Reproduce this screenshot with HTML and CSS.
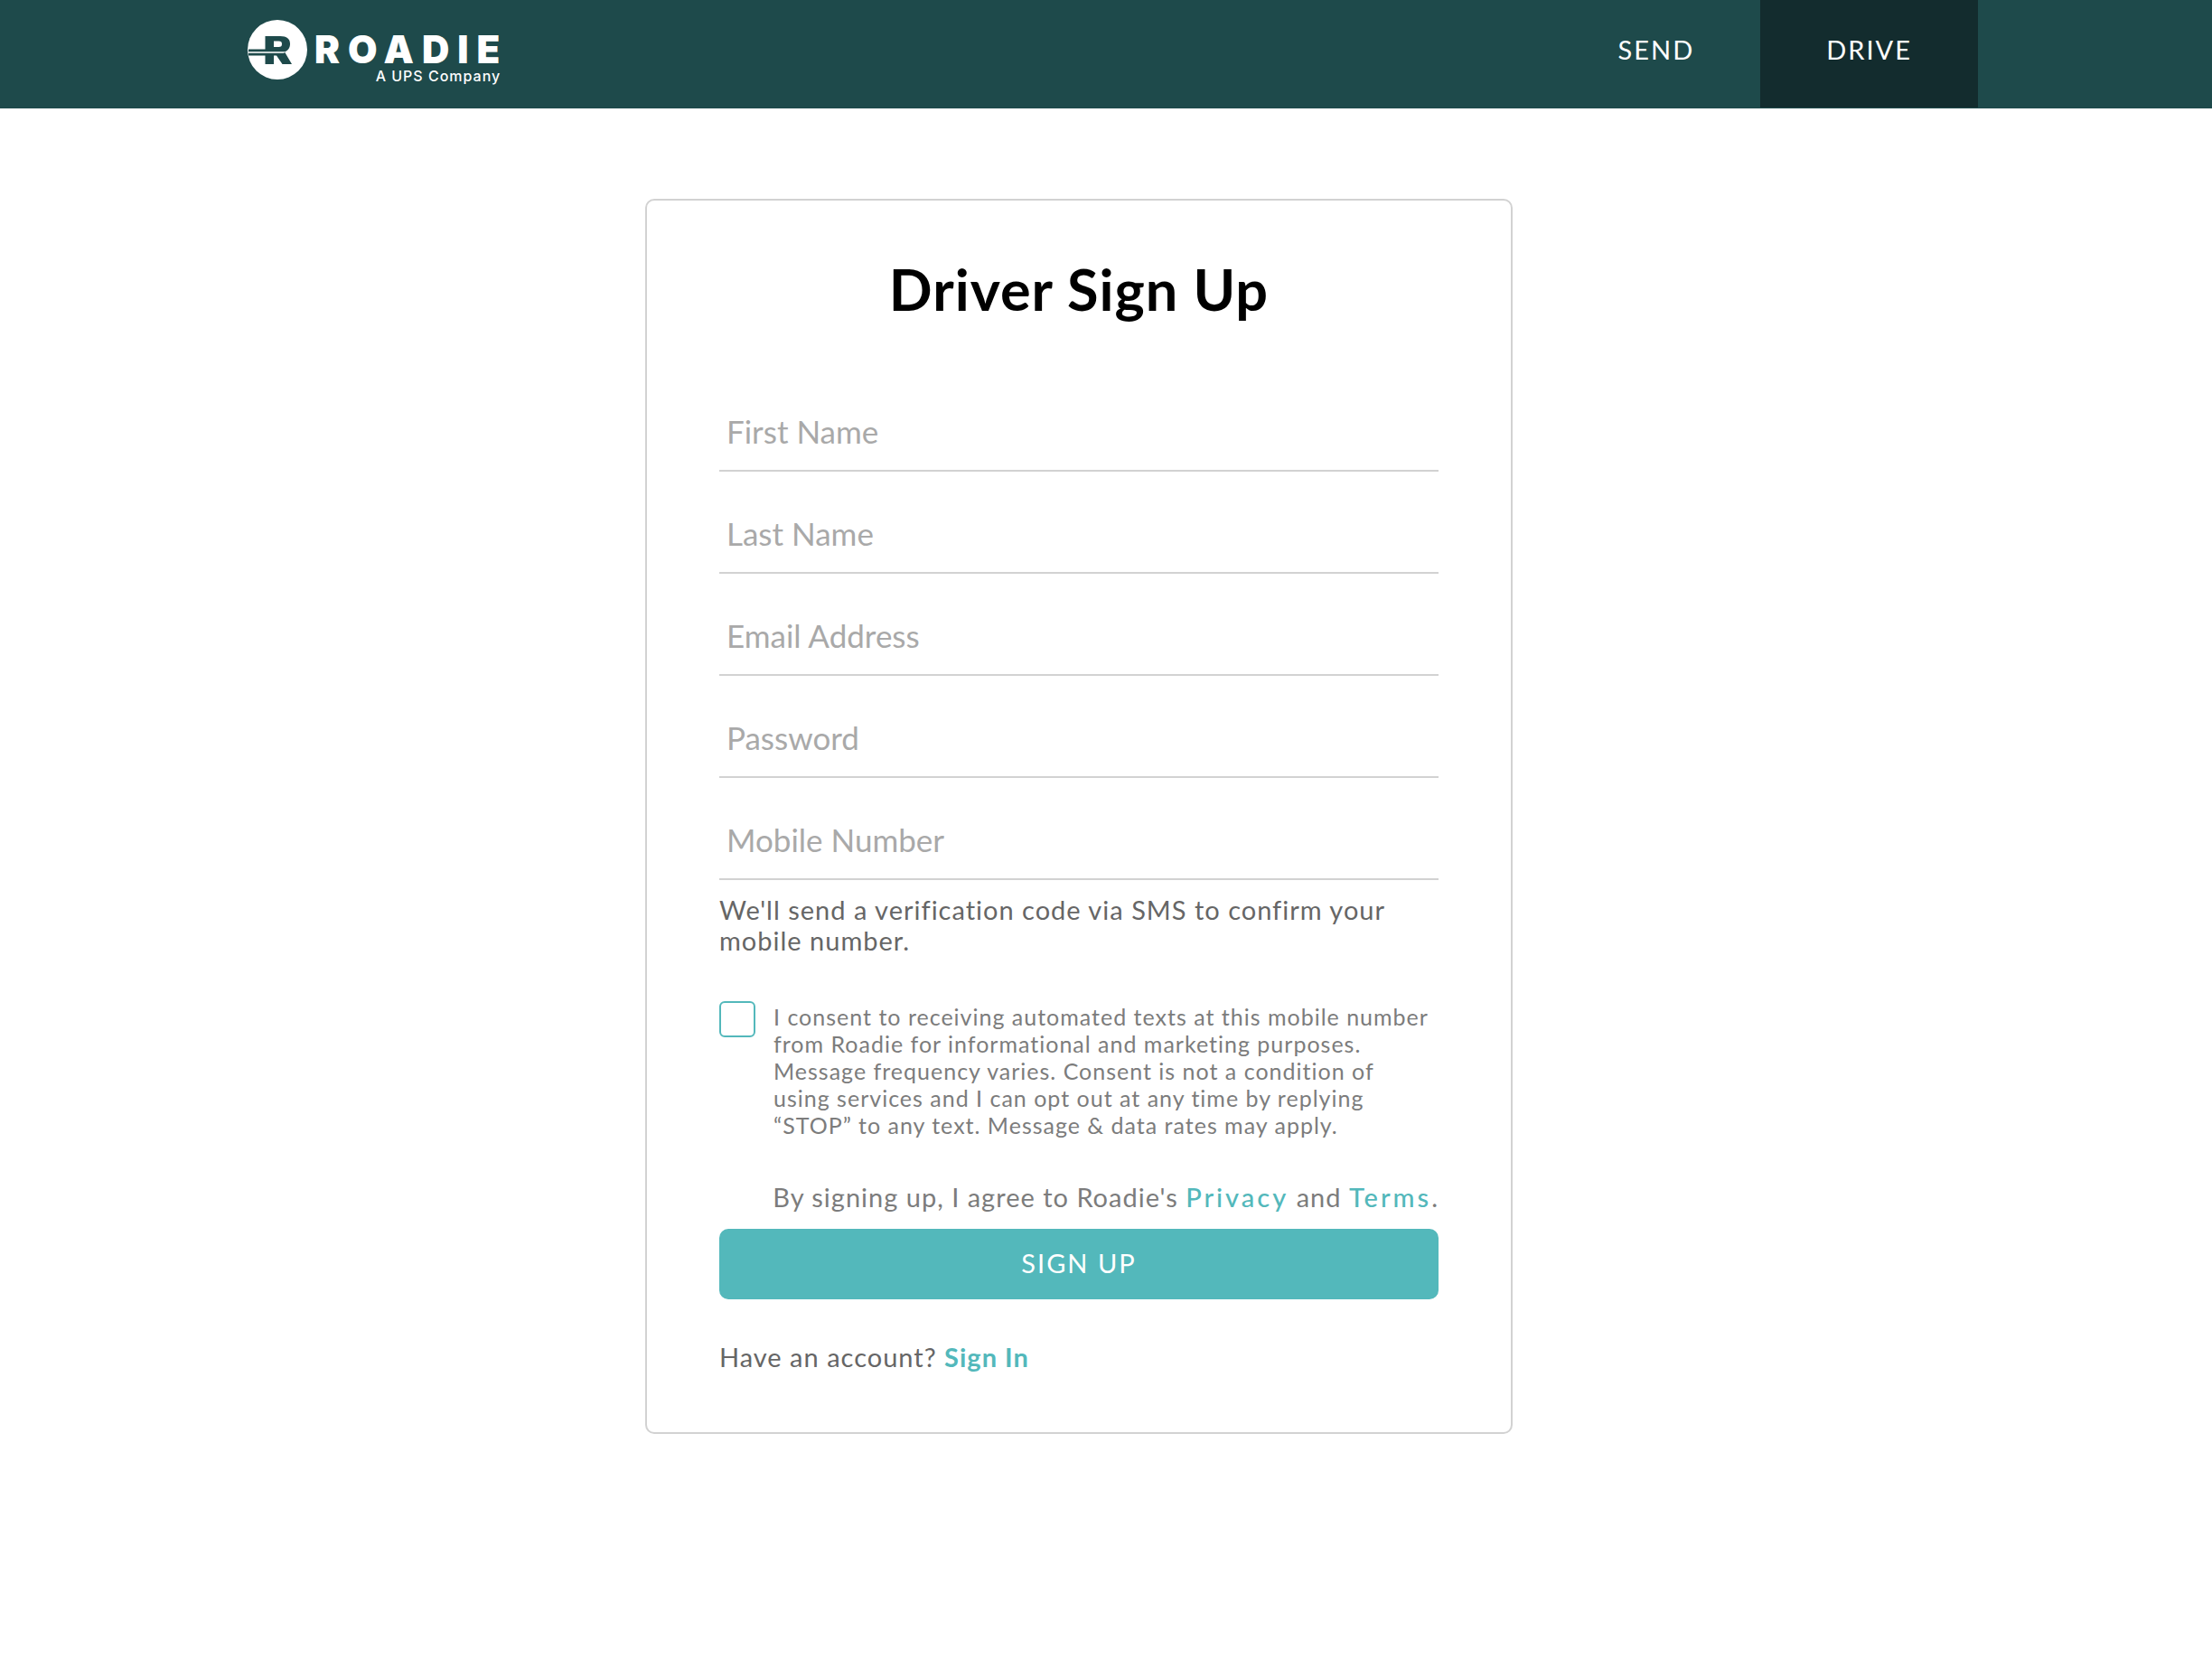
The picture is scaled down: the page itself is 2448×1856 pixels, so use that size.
FILE: index.html
```html
<!DOCTYPE html>
<html lang="en">
<head>
<meta charset="utf-8">
<meta name="viewport" content="width=device-width, initial-scale=1">
<title>Driver Sign Up | Roadie</title>
<link rel="stylesheet" href="styles.css">
</head>
<body>
<header class="site-header">
  <div class="header-inner">
    <a class="logo" href="#">
      <svg class="logo-mark" viewBox="0 0 66 66" aria-hidden="true">
        <circle cx="33" cy="33" r="33" fill="#fff"/>
        <path fill="#1e4a4b" fill-rule="evenodd" d="M19.500 18H36C43.500 18 47 21 47 26.500C47 31 45 33.500 41 35.500L49 49H38.500L32 39.500H29V49H19.500V39.500H1V32.500H19.500ZM29 23.500V30H34.500C37 30 38 29 38 26.800C38 24.500 37 23.500 34.500 23.500Z"/>
        <path fill="#c9d4d4" d="M0 35H42L40 37H0Z"/>
      </svg>
      <span class="logo-text">
        <span class="logo-name">ROADIE</span>
        <span class="logo-tagline">A UPS Company</span>
      </span>
    </a>
    <nav class="nav">
      <a class="nav-link" href="#">SEND</a>
      <a class="nav-link nav-link-active" href="#" aria-current="page">DRIVE</a>
    </nav>
  </div>
</header>
<main class="main">
  <form class="card">
    <h1 class="title">Driver Sign Up</h1>
    <div class="fields">
      <input class="field" type="text" placeholder="First Name" aria-label="First Name">
      <input class="field" type="text" placeholder="Last Name" aria-label="Last Name">
      <input class="field" type="email" placeholder="Email Address" aria-label="Email Address">
      <input class="field" type="password" placeholder="Password" aria-label="Password">
      <input class="field" type="tel" placeholder="Mobile Number" aria-label="Mobile Number">
    </div>
    <p class="hint">We'll send a verification code via SMS to confirm your mobile number.</p>
    <div class="consent">
      <input class="checkbox" type="checkbox" id="consent">
      <label class="consent-label" for="consent">I consent to receiving automated texts at this mobile number from Roadie for informational and marketing purposes. Message frequency varies. Consent is not a condition of using services and I can opt out at any time by replying “STOP” to any text. Message &amp; data rates may apply.</label>
    </div>
    <p class="terms">By signing up, I agree to Roadie's <a class="link" href="#">Privacy</a> and <a class="link" href="#">Terms</a>.</p>
    <button class="submit" type="submit">SIGN UP</button>
    <p class="signin">Have an account? <a class="signin-link" href="#">Sign In</a></p>
  </form>
</main>
</body>
</html>
```
FILE: styles.css
```css
* {
  box-sizing: border-box;
}

body {
  margin: 0;
  background: #fff;
  color: #666;
  font-family: Lato, "Open Sans", sans-serif;
}

a {
  text-decoration: none;
}

.site-header {
  background: #1e4a4b;
}

.header-inner {
  display: flex;
  justify-content: space-between;
  max-width: 1930px;
  height: 120px;
  margin: 0 auto;
}

.logo {
  display: flex;
  gap: 8px;
  margin-left: 15px;
  padding-top: 22px;
  color: #fff;
  font-family: Inter, sans-serif;
}

.logo-mark {
  width: 66px;
  height: 66px;
}

.logo-text {
  display: flex;
  flex-direction: column;
  padding-top: 13px;
}

.logo-name {
  font-size: 42px;
  font-weight: 900;
  line-height: 40px;
  letter-spacing: 9px;
}

.logo-tagline {
  padding-right: 8px;
  font-size: 16px;
  font-weight: 500;
  line-height: 18px;
  letter-spacing: 1px;
  text-align: right;
}

.nav {
  display: flex;
  height: 119px;
}

.nav-link {
  padding: 0 73px;
  color: #fff;
  font-size: 29px;
  line-height: 110px;
  letter-spacing: 2px;
}

.nav-link-active {
  background: #132c2e;
}

.main {
  display: flex;
  justify-content: center;
  padding: 100px 60px 100px 0;
}

.card {
  width: 100%;
  max-width: 960px;
  padding: 62px 80px 66px;
  border: 2px solid #d2d2d2;
  border-radius: 10px;
}

.title {
  margin: 0;
  color: #000;
  font-size: 63px;
  font-weight: 700;
  line-height: 72px;
  letter-spacing: 1px;
  text-align: center;
}

.fields {
  display: grid;
  gap: 35px;
  padding-top: 88px;
}

.field {
  width: 100%;
  height: 78px;
  padding: 0 8px 10px;
  border: 0;
  border-bottom: 2px solid #d2d2d2;
  background: none;
  color: #666;
  font-family: inherit;
  font-size: 35px;
}

.field::placeholder {
  color: #a9a9a9;
  opacity: 1;
}

.hint {
  margin: 16px 0 50px;
  font-size: 29px;
  line-height: 34px;
  letter-spacing: 1px;
}

.consent {
  display: flex;
  gap: 20px;
}

.checkbox {
  flex: none;
  width: 40px;
  height: 40px;
  margin: 0;
  border: 2px solid #53b8bb;
  border-radius: 6px;
  appearance: none;
}

.checkbox:checked {
  background: #53b8bb;
}

.consent-label {
  padding: 2px 6px 0 0;
  color: #7c7c7c;
  font-size: 25px;
  line-height: 30px;
  letter-spacing: 1px;
}

.terms {
  margin: 47px 0 17px;
  color: #7c7c7c;
  font-size: 29px;
  line-height: 36px;
  letter-spacing: 1px;
  text-align: right;
}

.link {
  color: #53b8bb;
  font-weight: 500;
  letter-spacing: 3px;
}

.submit {
  display: block;
  width: 100%;
  height: 78px;
  padding: 0 0 4px;
  border: 0;
  border-radius: 10px;
  background: #53b8bb;
  color: #fff;
  font-family: inherit;
  font-size: 29px;
  letter-spacing: 2px;
}

.signin {
  margin: 47px 0 0;
  font-size: 29px;
  line-height: 34px;
  letter-spacing: 1px;
}

.signin-link {
  color: #53b8bb;
  font-weight: 700;
}
```
